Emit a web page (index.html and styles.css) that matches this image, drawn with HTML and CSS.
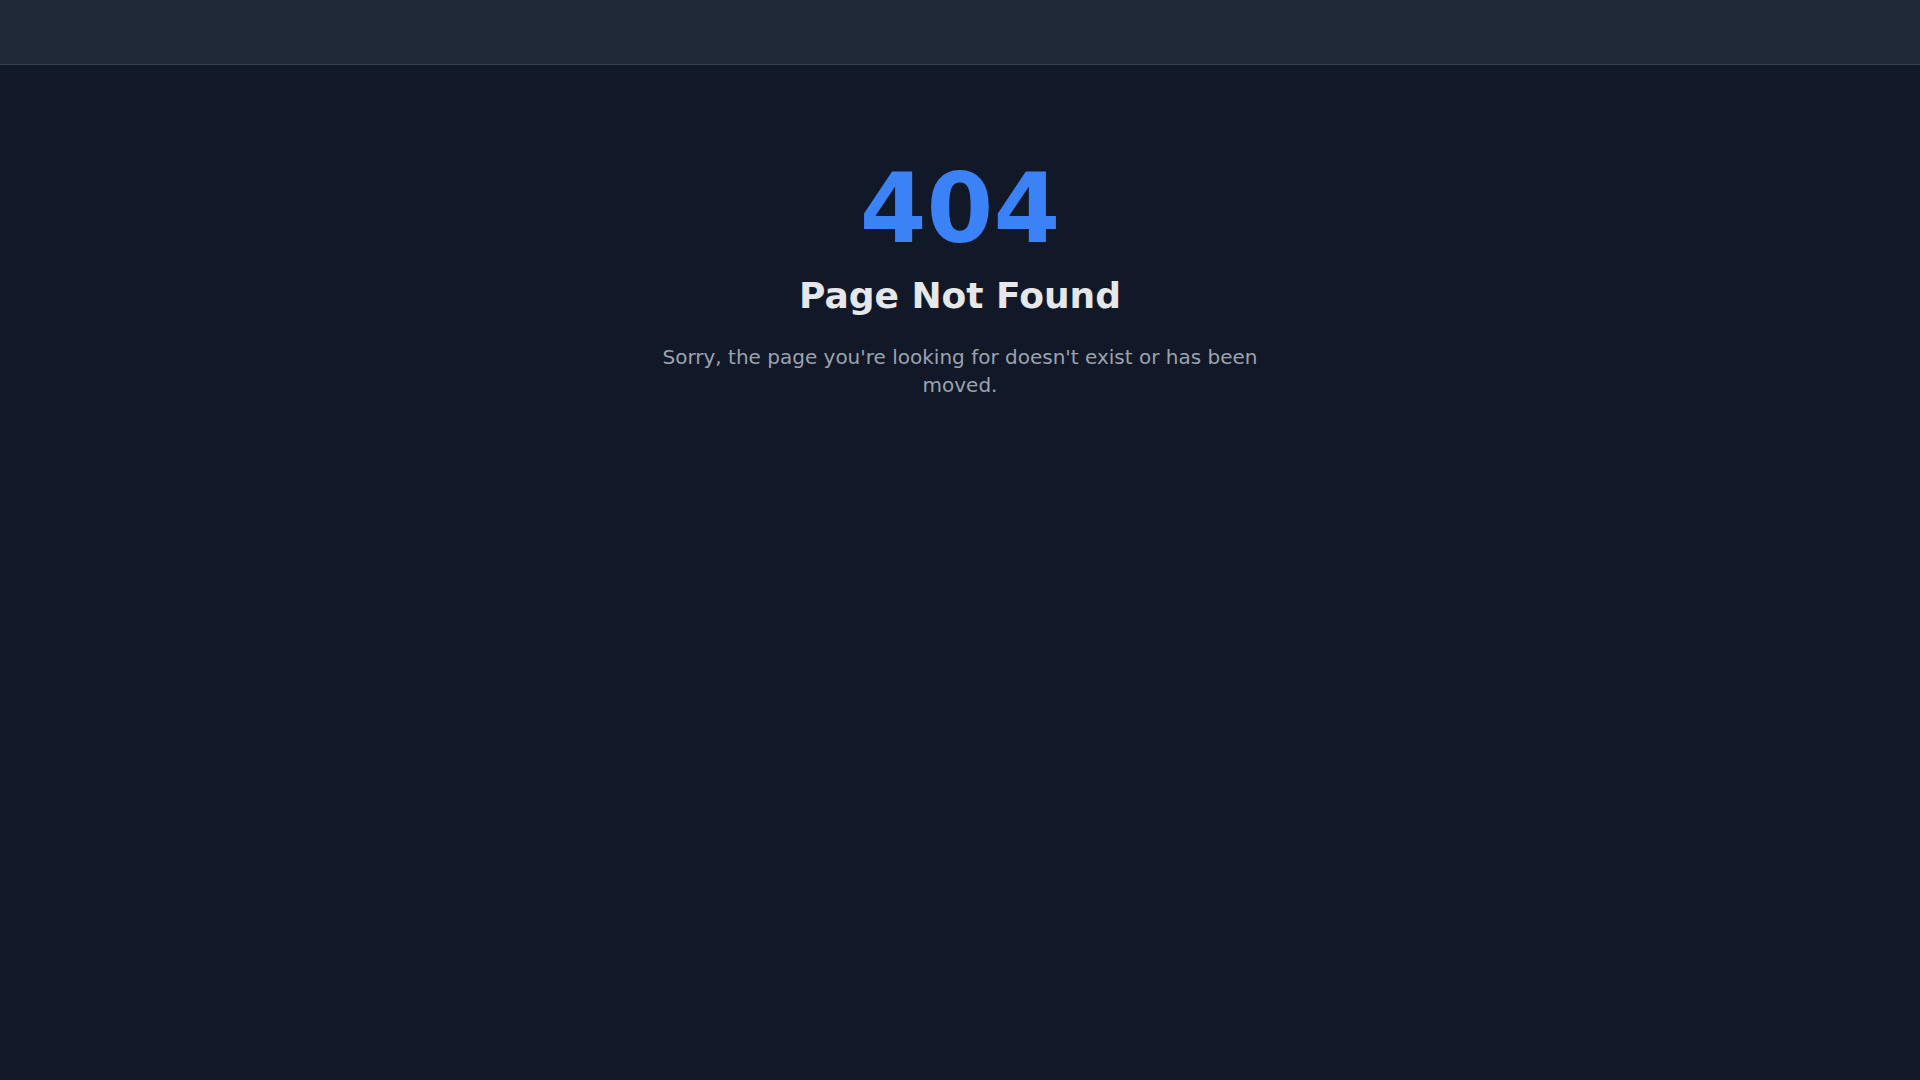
FILE: index.html
```html
<!DOCTYPE html>
<html lang="en">
<head>
<meta charset="utf-8">
<title>404 - Page Not Found</title>
<link rel="stylesheet" href="styles.css">
</head>
<body>
<header class="topbar"></header>
<main class="main">
  <div class="notfound">
    <div class="code">404</div>
    <h1 class="title">Page Not Found</h1>
    <p class="message">Sorry, the page you're looking for doesn't exist or has been moved.</p>
  </div>
</main>
</body>
</html>
```

FILE: styles.css
```css
html, body {
  margin: 0;
  padding: 0;
}
body {
  background: #111827;
  font-family: "DejaVu Sans", "Liberation Sans", sans-serif;
  min-height: 100vh;
}
.topbar {
  height: 64px;
  background: #1f2937;
  border-bottom: 1px solid #374151;
}
.main {
  display: flex;
  justify-content: center;
  padding: 96px 16px;
}
.notfound {
  display: flex;
  flex-direction: column;
  align-items: center;
  text-align: center;
  max-width: 640px;
}
.code {
  font-size: 96px;
  line-height: 1;
  font-weight: 700;
  color: #3b82f6;
  margin-bottom: 18px;
}
.title {
  margin: 0 0 26px;
  font-size: 36px;
  line-height: 42px;
  font-weight: 700;
  color: #e5e7eb;
}
.message {
  margin: 0;
  font-size: 20px;
  line-height: 28px;
  color: #9ca3af;
}
```
